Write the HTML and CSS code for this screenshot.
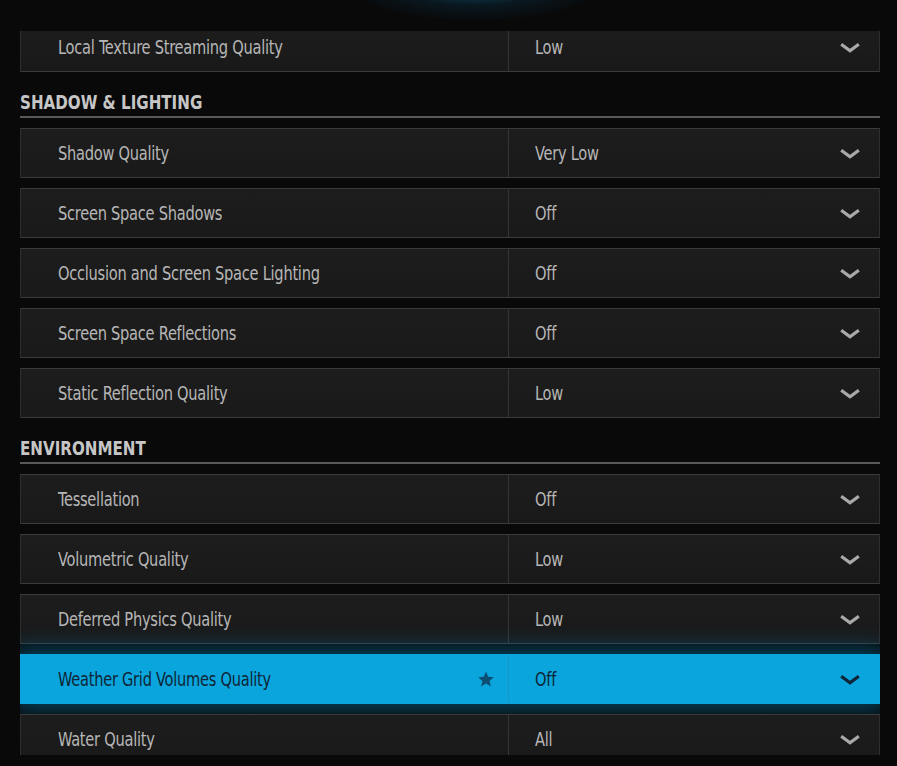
FILE: index.html
```html
<!DOCTYPE html>
<html lang="en">

<head>
    <meta charset="UTF-8">
    <meta name="viewport" content="width=device-width, initial-scale=1.0">
    <title>Graphics Settings</title>
    <link rel="stylesheet" href="styles.css">
</head>

<body>
    <div class="glow"></div>
    <div class="viewport">
        <div class="list">
            <div class="row first">
                <div class="label"><span class="txt">Local Texture Streaming Quality</span></div>
                <div class="value"><span class="txt">Low</span> <svg class="chev" viewBox="0 0 20 10"><polyline points="2,2 10,8 18,2" /></svg></div>
            </div>

            <div class="section">
                <h2><span class="txt">SHADOW &amp; LIGHTING</span></h2>
                <div class="row">
                    <div class="label"><span class="txt">Shadow Quality</span></div>
                    <div class="value"><span class="txt">Very Low</span> <svg class="chev" viewBox="0 0 20 10"><polyline points="2,2 10,8 18,2" /></svg></div>
                </div>
                <div class="row">
                    <div class="label"><span class="txt">Screen Space Shadows</span></div>
                    <div class="value"><span class="txt">Off</span> <svg class="chev" viewBox="0 0 20 10"><polyline points="2,2 10,8 18,2" /></svg></div>
                </div>
                <div class="row">
                    <div class="label"><span class="txt">Occlusion and Screen Space Lighting</span></div>
                    <div class="value"><span class="txt">Off</span> <svg class="chev" viewBox="0 0 20 10"><polyline points="2,2 10,8 18,2" /></svg></div>
                </div>
                <div class="row">
                    <div class="label"><span class="txt">Screen Space Reflections</span></div>
                    <div class="value"><span class="txt">Off</span> <svg class="chev" viewBox="0 0 20 10"><polyline points="2,2 10,8 18,2" /></svg></div>
                </div>
                <div class="row">
                    <div class="label"><span class="txt">Static Reflection Quality</span></div>
                    <div class="value"><span class="txt">Low</span> <svg class="chev" viewBox="0 0 20 10"><polyline points="2,2 10,8 18,2" /></svg></div>
                </div>
            </div>

            <div class="section">
                <h2><span class="txt">ENVIRONMENT</span></h2>
                <div class="row">
                    <div class="label"><span class="txt">Tessellation</span></div>
                    <div class="value"><span class="txt">Off</span> <svg class="chev" viewBox="0 0 20 10"><polyline points="2,2 10,8 18,2" /></svg></div>
                </div>
                <div class="row">
                    <div class="label"><span class="txt">Volumetric Quality</span></div>
                    <div class="value"><span class="txt">Low</span> <svg class="chev" viewBox="0 0 20 10"><polyline points="2,2 10,8 18,2" /></svg></div>
                </div>
                <div class="row">
                    <div class="label"><span class="txt">Deferred Physics Quality</span></div>
                    <div class="value"><span class="txt">Low</span> <svg class="chev" viewBox="0 0 20 10"><polyline points="2,2 10,8 18,2" /></svg></div>
                </div>
                <div class="row active">
                    <div class="label"><span class="txt">Weather Grid Volumes Quality</span>
                        <svg class="star" viewBox="0 0 24 24"><polygon points="12,2 14.9,8.9 22.4,9.6 16.8,14.6 18.5,22 12,18.1 5.5,22 7.2,14.6 1.6,9.6 9.1,8.9" /></svg>
                    </div>
                    <div class="value"><span class="txt">Off</span> <svg class="chev" viewBox="0 0 20 10"><polyline points="2,2 10,8 18,2" /></svg></div>
                </div>
                <div class="row">
                    <div class="label"><span class="txt">Water Quality</span></div>
                    <div class="value"><span class="txt">All</span> <svg class="chev" viewBox="0 0 20 10"><polyline points="2,2 10,8 18,2" /></svg></div>
                </div>
            </div>
        </div>
    </div>
</body>

</html>
```

FILE: styles.css
```css
* {
    margin: 0;
    padding: 0;
    box-sizing: border-box;
}

html,
body {
    width: 100%;
    height: 100%;
    overflow: hidden;
}

body {
    background-color: #090909;
    font-family: "DejaVu Sans Condensed", "DejaVu Sans", sans-serif;
    position: relative;
}

.glow {
    position: absolute;
    left: 345px;
    top: -60px;
    width: 260px;
    height: 80px;
    border-radius: 50%;
    background: radial-gradient(ellipse at center, rgba(20, 150, 210, 0.65) 0%, rgba(10, 80, 120, 0.2) 45%, rgba(0, 0, 0, 0) 75%);
}

.viewport {
    position: relative;
    margin: 31px 17px 0 20px;
    height: 724px;
    overflow: hidden;
}

.list {
    margin-top: -9px;
    display: flex;
    flex-direction: column;
}

/* condensed look: squeeze the glyphs horizontally */
.txt {
    display: inline-block;
    white-space: nowrap;
    transform: scaleX(0.855);
    transform-origin: left center;
}

.section {
    display: flex;
    flex-direction: column;
    gap: 10px;
}

.section h2 {
    font-size: 20px;
    font-weight: bold;
    color: #c6c6c6;
    line-height: 22px;
    margin-top: 19px;
    padding-bottom: 3px;
    border-bottom: 2px solid #595959;
}

.section h2 .txt {
    transform: scaleX(0.84);
}

.row {
    display: flex;
    height: 50px;
    width: 860px;
    background: linear-gradient(180deg, #1d1d1d 0%, #191919 100%);
    border: 1px solid #3b3b3b;
    border-left-color: #2e2e2e;
    border-right-color: #2e2e2e;
    color: #b6b6b6;
    font-size: 19px;
    letter-spacing: -0.3px;
}

.label {
    width: 488px;
    padding-left: 37px;
    padding-right: 13px;
    display: flex;
    align-items: center;
    justify-content: space-between;
    border-right: 1px solid #353535;
}

.value {
    flex: 1;
    padding-left: 26px;
    padding-right: 18px;
    display: flex;
    align-items: center;
    justify-content: space-between;
}

.chev {
    width: 22px;
    height: 11px;
}

.chev polyline {
    fill: none;
    stroke: #a9a9a9;
    stroke-width: 3;
}

.row.active {
    background: #0ba5de;
    border-color: #0ba5de;
    color: #0e2535;
    box-shadow: 0 0 22px 6px rgba(0, 140, 200, 0.45);
}

.row.active .label {
    border-right-color: #1896c8;
}

.row.active .chev polyline {
    stroke: #0e2535;
}

.star {
    width: 18px;
    height: 18px;
}

.star polygon {
    fill: #0c4f73;
}
```
